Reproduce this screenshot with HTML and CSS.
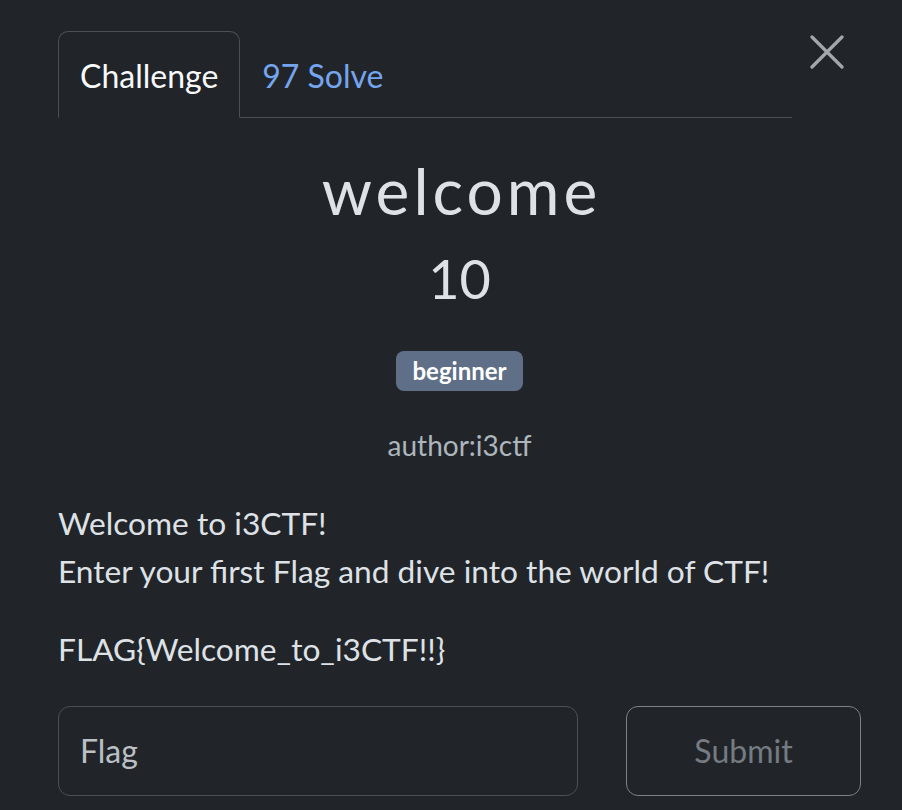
FILE: index.html
```html
<!DOCTYPE html>
<html lang="en">
<head>
<meta charset="utf-8">
<title>welcome</title>
<link rel="stylesheet" href="styles.css">
</head>
<body>
<div class="modal">
  <div class="header">
    <nav class="tabs">
      <a class="tab active">Challenge</a>
      <a class="tab">97 Solve</a>
    </nav>
    <button class="close" aria-label="Close">
      <svg width="34" height="34" viewBox="0 0 34 34"><path d="M2 2 L32 32 M32 2 L2 32" stroke="#a4a7ab" stroke-width="3.2" stroke-linecap="round" fill="none"/></svg>
    </button>
  </div>
  <h2 class="name">welcome</h2>
  <h3 class="value">10</h3>
  <div class="tags"><span class="badge">beginner</span></div>
  <p class="author">author:i3ctf</p>
  <div class="desc">
    <p>Welcome to i3CTF!<br>Enter your first Flag and dive into the world of CTF!</p>
    <p>FLAG{Welcome_to_i3CTF!!}</p>
  </div>
  <form class="submit-row">
    <input class="flag" type="text" placeholder="Flag">
    <button class="submit" type="button">Submit</button>
  </form>
</div>
</body>
</html>
```
FILE: styles.css
```css
html, body {
  margin: 0;
  padding: 0;
  background: #212529;
  height: 100%;
}
body {
  font-family: Lato, "Noto Sans", sans-serif;
  color: #dee2e6;
}
.modal {
  padding: 31px 41px 0 58px;
}
.header {
  display: flex;
  align-items: flex-start;
}
.tabs {
  flex: 1;
  display: flex;
  border-bottom: 1.5px solid #4b5057;
}
.tab {
  font-size: 32px;
  line-height: 48px;
  padding: 20px 21px 17px;
  border: 1.5px solid transparent;
  border-top-left-radius: 10px;
  border-top-right-radius: 10px;
  margin-bottom: -1.5px;
  color: #75a5ee;
}
.tab.active {
  color: #f8f9fa;
  background: #212529;
  border-color: #4b5057 #4b5057 #212529;
}
.close {
  width: 69px;
  height: 40px;
  padding: 0;
  margin-top: 1px;
  background: none;
  border: 0;
  display: flex;
  justify-content: center;
  align-items: center;
}
.name {
  margin: 34px 0 0;
  text-align: center;
  font-weight: 400;
  font-size: 64px;
  line-height: 77px;
  letter-spacing: 4px;
  text-indent: 4px;
  color: #dee2e6;
}
.value {
  margin: 18px 0 0;
  text-align: center;
  font-weight: 400;
  font-size: 54px;
  line-height: 64px;
  color: #dee2e6;
}
.tags {
  margin-top: 40px;
  text-align: center;
}
.badge {
  display: inline-block;
  background: #5f6f87;
  color: #fff;
  font-weight: 700;
  font-size: 24px;
  line-height: 40px;
  padding: 0 16px;
  border-radius: 8px;
}
.author {
  margin: 36px 0 0;
  text-align: center;
  font-size: 28px;
  line-height: 36px;
  color: #adb5bd;
}
.desc {
  margin-top: 36px;
  font-size: 31.7px;
  line-height: 48px;
}
.desc p {
  margin: 0 0 30px;
}
.desc p:last-child {
  margin-bottom: 33px;
}
.submit-row {
  margin-top: 0;
  display: flex;
  gap: 48px;
}
.flag {
  width: 520px;
  height: 90px;
  box-sizing: border-box;
  background: #212529;
  border: 1.5px solid #4b5057;
  border-radius: 12px;
  padding: 0 21px;
  font-family: inherit;
  font-size: 32px;
  color: #dee2e6;
  outline: none;
}
.flag::placeholder {
  color: #bcc0c5;
}
.submit {
  width: 235px;
  height: 90px;
  box-sizing: border-box;
  background: transparent;
  border: 1.5px solid #7c8288;
  border-radius: 12px;
  font-family: inherit;
  font-size: 32px;
  color: #757b81;
}
```
